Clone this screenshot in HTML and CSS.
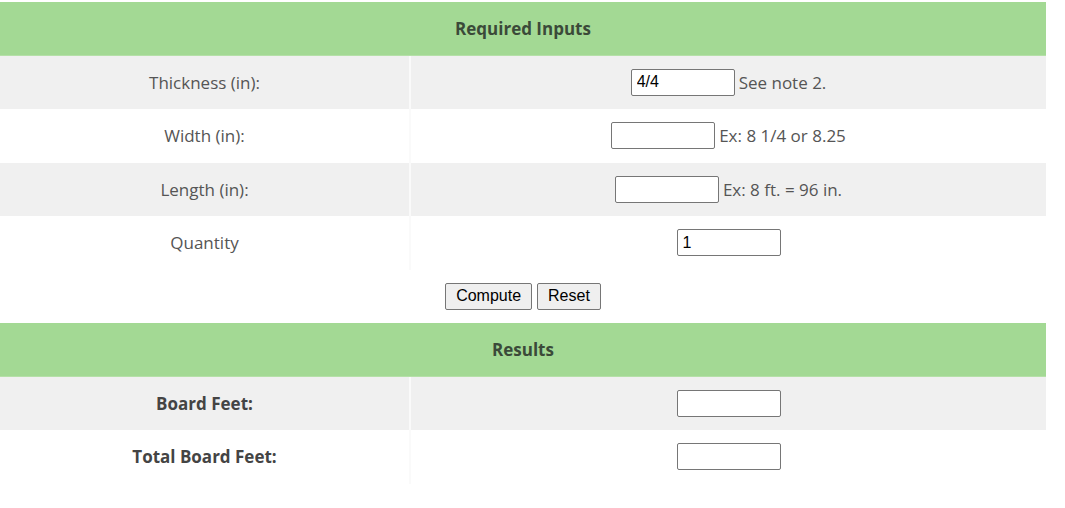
FILE: index.html
```html
<!DOCTYPE html>
<html>
<head>
    <meta charset="utf-8" />
    <title>Board Foot Calculator</title>
    <link rel="stylesheet" href="styles.css">
</head>
<body>
    <div id="calc">
        <div class="head">Required Inputs</div>

        <div class="row grey">
            <div class="label">Thickness (in):</div>
            <div class="field"><input type="text" class="num" value="4/4"> See note 2.</div>
        </div>
        <div class="row">
            <div class="label">Width (in):</div>
            <div class="field"><input type="text" class="num"> Ex: 8 1/4 or 8.25</div>
        </div>
        <div class="row grey">
            <div class="label">Length (in):</div>
            <div class="field"><input type="text" class="num"> Ex: 8 ft. = 96 in.</div>
        </div>
        <div class="row">
            <div class="label">Quantity</div>
            <div class="field"><input type="text" class="num" value="1"></div>
        </div>
        <div class="buttons">
            <button class="btn">Compute</button>
            <button class="btn">Reset</button>
        </div>

        <div class="head">Results</div>

        <div class="row grey">
            <div class="label bold">Board Feet:</div>
            <div class="field"><input type="text" class="num"></div>
        </div>
        <div class="row">
            <div class="label bold">Total Board Feet:</div>
            <div class="field"><input type="text" class="num"></div>
        </div>
    </div>
</body>
</html>
```

FILE: styles.css
```css
body {
    margin: 0;
    padding-top: 2px;
    background: #ffffff;
    font-family: "Open Sans", "Liberation Sans", sans-serif;
    font-size: 17px;
    color: #555555;
}
#calc {
    width: 1046px;
}
.head {
    height: 53.5px;
    display: flex;
    align-items: center;
    justify-content: center;
    background-color: #a3d994;
    border-bottom: 1px solid #b5e0a8;
    box-sizing: border-box;
    font-weight: bold;
    color: #3b4a39;
}
.row {
    height: 53.5px;
    display: grid;
    grid-template-columns: 411px 1fr;
}
.grey {
    background-color: #f0f0f0;
}
.label {
    display: flex;
    align-items: center;
    justify-content: center;
    border-right: 2px solid #fafafa;
}
.bold {
    font-weight: bold;
    color: #444444;
}
.field {
    display: flex;
    align-items: center;
    justify-content: center;
    gap: 4px;
}
.num {
    width: 104px;
    height: 27px;
    box-sizing: border-box;
    padding: 1px 5px;
    border: 1px solid #767676;
    border-radius: 2px;
    background: #ffffff;
    font-family: "Liberation Sans", Arial, sans-serif;
    font-size: 16px;
    color: #000000;
}
.buttons {
    height: 53.5px;
    display: flex;
    align-items: center;
    justify-content: center;
    gap: 5px;
}
.btn {
    height: 27px;
    padding: 0 10px;
    border: 1px solid #767676;
    border-radius: 2px;
    background-color: #efefef;
    font-family: "Liberation Sans", Arial, sans-serif;
    font-size: 16px;
    color: #000000;
}
```
